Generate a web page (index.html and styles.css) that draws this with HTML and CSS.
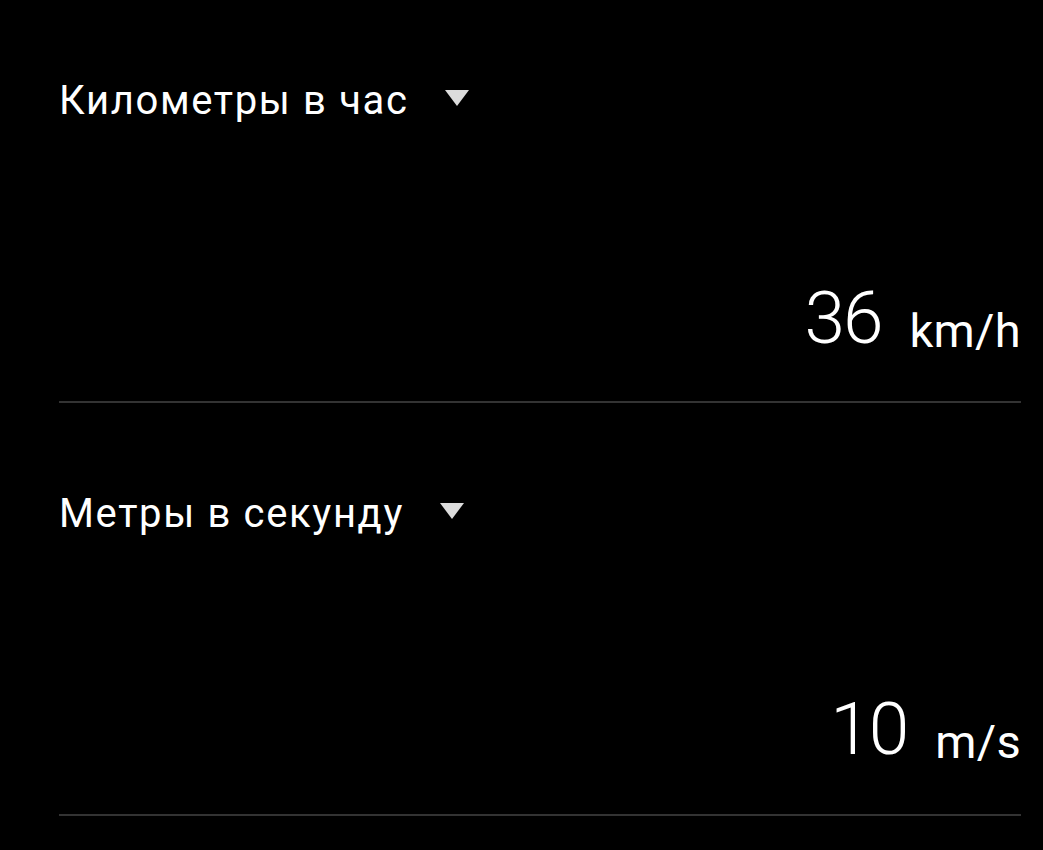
FILE: index.html
```html
<!DOCTYPE html>
<html lang="ru">
<head>
<meta charset="utf-8">
<link rel="stylesheet" href="styles.css">
</head>
<body>
<div class="screen">
  <section class="unit">
    <div class="picker">
      <span class="label">Километры в час</span>
      <svg class="caret" width="24" height="16" viewBox="0 0 24 16"><polygon points="0,0 24,0 12,16" fill="#dcdcdc"/></svg>
    </div>
    <div class="value-row">
      <span class="value">36</span>
      <span class="suffix">km/h</span>
    </div>
  </section>
  <section class="unit">
    <div class="picker">
      <span class="label">Метры в секунду</span>
      <svg class="caret" width="24" height="16" viewBox="0 0 24 16"><polygon points="0,0 24,0 12,16" fill="#dcdcdc"/></svg>
    </div>
    <div class="value-row">
      <span class="value">10</span>
      <span class="suffix">m/s</span>
    </div>
  </section>
</div>
</body>
</html>
```
FILE: styles.css
```css
html, body {
  margin: 0;
  padding: 0;
  background: #000;
}
body {
  width: 1043px;
  height: 850px;
  overflow: hidden;
  font-family: Roboto, "Noto Sans", sans-serif;
  color: #fff;
}
.screen {
  display: flex;
  flex-direction: column;
  padding: 0 22px 0 59px;
}
.unit {
  height: 403px;
  border-bottom: 2px solid #333;
  display: flex;
  flex-direction: column;
  justify-content: space-between;
  box-sizing: border-box;
}
.unit + .unit {
  height: 413px;
}
.picker {
  display: flex;
  align-items: center;
  gap: 36px;
  margin-top: 76px;
  height: 50px;
}
.unit + .unit .picker {
  margin-top: 86px;
}
.label {
  font-size: 40px;
  line-height: 50px;
  letter-spacing: 1.65px;
}
.caret {
  display: block;
  margin-top: -7px;
}
.value-row {
  display: flex;
  justify-content: flex-end;
  align-items: baseline;
  gap: 28px;
  height: 80px;
  margin-bottom: 43px;
}
.unit + .unit .value-row {
  margin-bottom: 45px;
}
.value {
  font-size: 73px;
  font-weight: 300;
  line-height: 80px;
  letter-spacing: -2px;
}
.suffix {
  font-size: 47px;
  line-height: 50px;
  letter-spacing: 0.3px;
  position: relative;
  top: 4px;
}
```
